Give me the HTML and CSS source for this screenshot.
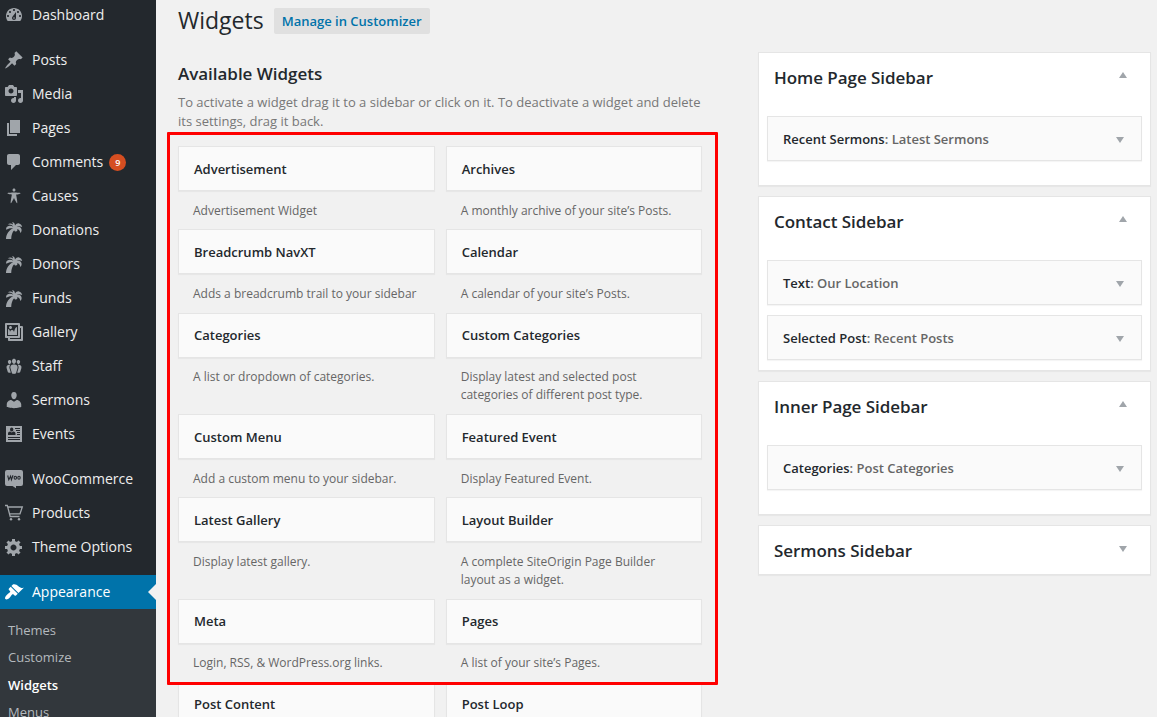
FILE: index.html
```html
<!DOCTYPE html>
<html lang="en">
<head>
<meta charset="utf-8">
<title>Widgets</title>
<link rel="stylesheet" href="styles.css">
</head>
<body>
<div class="admin">
<nav class="menu">
  <a class="item"><svg class="icon" viewBox="0 0 20 20"><path d="M3.76 16h12.48c1.1-1.37 1.76-3.11 1.76-5 0-4.42-3.58-8-8-8s-8 3.58-8 8c0 1.89.66 3.63 1.76 5zM10 4c.55 0 1 .45 1 1s-.45 1-1 1-1-.45-1-1 .45-1 1-1zM6 6c.55 0 1 .45 1 1s-.45 1-1 1-1-.45-1-1 .45-1 1-1zm8 0c.55 0 1 .45 1 1s-.45 1-1 1-1-.45-1-1 .45-1 1-1zM12 7v6c0 1.1-.9 2-2 2s-2-.9-2-2c0-.57.24-1.080.63-1.450zM4 10c.55 0 1 .45 1 1s-.45 1-1 1-1-.45-1-1 .45-1 1-1zm12 0c.55 0 1 .45 1 1s-.45 1-1 1-1-.45-1-1 .45-1 1-1zm-6 2.200a.8.8 0 1 0 0 1.600a.8.8 0 1 0 0-1.600z" fill-rule="evenodd"/></svg><span>Dashboard</span></a>
  <div class="separator"></div>
  <a class="item"><svg class="icon" viewBox="0 0 20 20"><path d="M10.440 3.020l1.820-1.820 6.360 6.350-1.830 1.820c-1.050-.68-2.480-.57-3.410.36l-.75.75c-.92.93-1.040 2.350-.35 3.410l-1.830 1.820-2.410-2.410-2.800 2.790c-.42.42-3.380 2.710-3.800 2.290s1.860-3.390 2.280-3.810l2.790-2.790L4.100 9.360l1.830-1.820c1.050.69 2.480.57 3.400-.36l.75-.75c.93-.92 1.050-2.350.36-3.410z"/></svg><span>Posts</span></a>
  <a class="item"><svg class="icon" viewBox="0 0 20 20"><path fill-rule="evenodd" d="M13 11V4c0-.55-.45-1-1-1h-1.670L9 1H5L3.670 3H2c-.55 0-1 .45-1 1v7c0 .55.45 1 1 1h10c.55 0 1-.45 1-1zM7 4.500c1.380 0 2.500 1.120 2.500 2.500S8.380 9.500 7 9.500 4.500 8.380 4.500 7 5.620 4.500 7 4.500zM14 6h5v10.500c0 1.380-1.120 2.500-2.500 2.500S14 17.880 14 16.500s1.120-2.500 2.500-2.500c.17 0 .34.02.5.05V9h-3V6zm-4 8.050V13h2v3.500c0 1.380-1.120 2.500-2.500 2.500S7 17.880 7 16.500 8.120 14 9.500 14c.17 0 .34.02.5.05z"/></svg><span>Media</span></a>
  <a class="item"><svg class="icon" viewBox="0 0 20 20"><path d="M6 15V2h10v13H6zm-1 1h8v2H3V5h2v11z"/></svg><span>Pages</span></a>
  <a class="item"><svg class="icon" viewBox="0 0 20 20"><path d="M5 2h9c1.100 0 2 .9 2 2v7c0 1.100-.9 2-2 2h-2l-5 5v-5H5c-1.100 0-2-.9-2-2V4c0-1.100.9-2 2-2z"/></svg><span>Comments</span><b class="count">9</b></a>
  <a class="item"><svg class="icon" viewBox="0 0 20 20"><path d="M10 2.600c.83 0 1.500.67 1.500 1.500s-.67 1.510-1.500 1.510c-.82 0-1.500-.68-1.500-1.510s.68-1.500 1.500-1.500zM3.400 7.360c0-.65 6.600-.76 6.600-.76s6.600.11 6.600.76-4.470 1.400-4.470 1.400 1.690 8.140 1.060 8.380c-.62.24-3.190-5.190-3.190-5.190s-2.560 5.430-3.180 5.190c-.63-.24 1.060-8.380 1.060-8.380S3.400 8.010 3.400 7.360z"/></svg><span>Causes</span></a>
  <a class="item"><svg class="icon" viewBox="0 0 20 20"><path id="palm" d="M8 2.300C9.700 2 10.800 3.300 11 5.400C12.200 3.700 13.700 3 15 3.400C16.700 3.900 17.800 5.200 18.200 7C16 6 13.800 5.900 12 6.900C14.200 6.600 16.300 7 17.100 8.300C18 9.800 17.700 11.900 16.400 13C16 10.800 14.900 9.200 13.200 9C13.900 10.400 13 11.700 11.500 11.500C10.800 11.400 10.300 10.900 10.200 10.200C8.300 12 7.300 15.200 7.200 19H2C2.100 14 5 10.300 9.100 8.300C6.500 7.900 4.200 8.300 2.200 9.800C1.700 7.600 3 6 5.500 5.700C6.900 5.600 8.300 6 9.300 6.700C8 5 6 4.200 3.700 4.700C5 3.200 7.300 3.200 9 4.600C9 3.700 8.700 2.900 8 2.300z"/></svg><span>Donations</span></a>
  <a class="item"><svg class="icon" viewBox="0 0 20 20"><use href="#palm"/></svg><span>Donors</span></a>
  <a class="item"><svg class="icon" viewBox="0 0 20 20"><use href="#palm"/></svg><span>Funds</span></a>
  <a class="item"><svg class="icon" viewBox="0 0 20 20"><path d="M16 4h1.960c.57 0 1.040.47 1.040 1.040v12.920c0 .57-.47 1.040-1.040 1.040H5.040C4.470 19 4 18.530 4 17.960V16H2.040C1.470 16 1 15.530 1 14.960V2.040C1 1.470 1.470 1 2.040 1h12.920c.57 0 1.040.47 1.040 1.040V4zM3 14h11V3H3v11zm5-8.500C8 4.670 7.330 4 6.500 4S5 4.670 5 5.500 5.670 7 6.500 7 8 6.330 8 5.500zm2 4.500s1-5 3-5v8H4V7c2 0 2 3 2 3s.33-2 2-2 2 2 2 2zm7 7V6h-1v8.960c0 .57-.47 1.040-1.040 1.040H6v1h11z" fill-rule="evenodd"/></svg><span>Gallery</span></a>
  <a class="item"><svg class="icon" viewBox="0 0 20 20"><path d="M8.030 4.460c-.29 1.280.55 3.460 1.970 3.460 1.410 0 2.250-2.180 1.960-3.460-.22-.98-1.080-1.630-1.960-1.630-.89 0-1.740.65-1.970 1.630zm-4.130.9c-.25 1.080.47 2.930 1.670 2.930s1.920-1.850 1.670-2.930c-.19-.83-.92-1.390-1.670-1.390s-1.480.56-1.670 1.390zm8.860 0c-.25 1.080.47 2.930 1.660 2.930 1.200 0 1.920-1.850 1.670-2.930-.19-.83-.92-1.390-1.670-1.390-.74 0-1.470.56-1.660 1.390zm-.59 11.430l1.250-4.300C14.200 10 12.710 8.470 10 8.470c-2.720 0-4.210 1.530-3.440 4.020l1.260 4.300C8.050 17.510 9 18 10 18c.98 0 1.940-.49 2.170-1.210zm-6.100-7.630c-.49.67-.96 1.830-.42 3.590l1.120 3.790c-.34.2-.77.31-1.200.31-.85 0-1.650-.41-1.850-1.030l-1.070-3.650c-.65-2.110.61-3.400 2.920-3.400.27 0 .54.02.79.06-.1.1-.2.22-.29.33zm8.350-.39c2.310 0 3.580 1.290 2.920 3.400l-1.070 3.650c-.2.62-1 1.030-1.850 1.030-.43 0-.86-.11-1.200-.31l1.110-3.770c.55-1.780.08-2.940-.42-3.610-.08-.11-.18-.23-.28-.33.25-.04.51-.06.79-.06z"/></svg><span>Staff</span></a>
  <a class="item"><svg class="icon" viewBox="0 0 20 20"><path d="M10 9.250c-2.270 0-2.730-3.440-2.730-3.440C7 4.020 7.820 2 9.970 2c2.160 0 2.980 2.020 2.710 3.810 0 0-.41 3.440-2.680 3.440zm0 2.570L12.720 10c2.390 0 4.520 2.330 4.520 4.530v2.490s-3.650 1.130-7.240 1.130c-3.650 0-7.240-1.130-7.240-1.130v-2.490c0-2.250 1.940-4.480 4.470-4.480z"/></svg><span>Sermons</span></a>
  <a class="item"><svg class="icon" viewBox="0 0 20 20"><path fill-rule="evenodd" d="M2 2h16v16H2zM7.700 3.600a1.700 1.900 0 1 0 0 3.800a1.700 1.900 0 1 0 0-3.800zM4 11V9.500C4 8.200 5 7.600 6.200 7.500L7.700 8.600L9.200 7.500C10.500 7.600 11.500 8.200 11.500 9.500V11zM11 4h5v1h-5zM12 6h4v1h-4zM13 8h3v1h-3zM13 10h3v1h-3zM4 13h12v1H4zM4 15h12v1H4z"/></svg><span>Events</span></a>
  <div class="separator"></div>
  <a class="item"><svg class="icon" viewBox="0 0 20 20"><path d="M3 1h14q2 0 2 2v12q0 2-2 2h-5v2.300L8.500 17H3q-2 0-2-2V3q0-2 2-2z"/><path class="cutout" d="M3.700 6.500l1.100 4.300 1.800-3.600.8 3.600L9 6.300M11.300 7.300a1.200 1.500 0 1 0 0 3a1.200 1.500 0 1 0 0-3zM15 7.300a1.200 1.500 0 1 0 0 3a1.200 1.500 0 1 0 0-3z"/></svg><span>WooCommerce</span></a>
  <a class="item"><svg class="icon" viewBox="0 0 20 20"><path class="line" d="M1 2.500h2.300L6.200 13.500H15.500M4 4h14.300L16 10.800H5.500"/><circle cx="7" cy="16.200" r="1.200"/><circle cx="15" cy="16.200" r="1.200"/></svg><span>Products</span></a>
  <a class="item"><svg class="icon" viewBox="0 0 20 20"><path fill-rule="evenodd" d="M18 12h-2.180c-.17.7-.44 1.350-.81 1.930l1.540 1.540-2.100 2.100-1.540-1.540c-.58.36-1.230.63-1.910.79V19H8v-2.180c-.68-.16-1.330-.43-1.910-.79l-1.540 1.540-2.120-2.120 1.540-1.540c-.36-.58-.63-1.230-.79-1.910H1V9.030h2.170c.16-.7.44-1.350.8-1.940L2.430 5.550l2.100-2.100 1.540 1.540c.58-.37 1.240-.64 1.930-.81V2h3v2.180c.68.16 1.330.43 1.910.79l1.540-1.540 2.120 2.120-1.540 1.540c.36.59.64 1.240.8 1.940H18V12zm-8.500 1.500c1.660 0 3-1.340 3-3s-1.340-3-3-3-3 1.340-3 3 1.340 3 3 3z"/></svg><span>Theme Options</span></a>
  <div class="separator"></div>
  <a class="item current"><svg class="icon" viewBox="0 0 20 20"><path d="M14.480 11.060L7.410 3.990l1.500-1.500c.5-.56 2.300-.47 3.510.32 1.210.8 1.430 1.280 2.910 2.100 1.180.64 2.450 1.260 4.450.85zm-.71.71L6.700 4.700 4.930 6.470c-.39.39-.39 1.020 0 1.410l1.060 1.060c.39.39.39 1.030 0 1.420-.6.6-1.430 1.110-2.210 1.690-.35.26-.7.53-1.010.84C1.430 14.230.4 16.080 1.400 17.070c.99 1 2.840-.03 4.180-1.360.31-.31.58-.66.85-1.020.57-.78 1.080-1.610 1.690-2.210.39-.39 1.020-.39 1.410 0l1.060 1.060c.39.39 1.020.39 1.410 0z"/></svg><span>Appearance</span></a>
  <div class="submenu"><a>Themes</a><a>Customize</a><a class="active">Widgets</a><a>Menus</a></div>
</nav>
<main class="content">
  <section class="available">
    <header class="heading"><h1>Widgets</h1><a class="action">Manage in Customizer</a></header>
    <h2>Available Widgets</h2>
    <p class="intro">To activate a widget drag it to a sidebar or click on it. To deactivate a widget and delete<br>its settings, drag it back.</p>
    <div class="grid">
      <div><h3 class="card">Advertisement</h3><p>Advertisement Widget</p></div>
      <div><h3 class="card">Archives</h3><p>A monthly archive of your site’s Posts.</p></div>
      <div><h3 class="card">Breadcrumb NavXT</h3><p>Adds a breadcrumb trail to your sidebar</p></div>
      <div><h3 class="card">Calendar</h3><p>A calendar of your site’s Posts.</p></div>
      <div><h3 class="card">Categories</h3><p>A list or dropdown of categories.</p></div>
      <div><h3 class="card">Custom Categories</h3><p>Display latest and selected post<br>categories of different post type.</p></div>
      <div><h3 class="card">Custom Menu</h3><p>Add a custom menu to your sidebar.</p></div>
      <div><h3 class="card">Featured Event</h3><p>Display Featured Event.</p></div>
      <div><h3 class="card">Latest Gallery</h3><p>Display latest gallery.</p></div>
      <div><h3 class="card">Layout Builder</h3><p>A complete SiteOrigin Page Builder<br>layout as a widget.</p></div>
      <div><h3 class="card">Meta</h3><p>Login, RSS, &amp; WordPress.org links.</p></div>
      <div><h3 class="card">Pages</h3><p>A list of your site’s Pages.</p></div>
      <div><h3 class="card">Post Content</h3></div>
      <div><h3 class="card">Post Loop</h3></div>
    </div>
    <div class="highlight"></div>
  </section>
  <aside class="areas">
    <section class="area open"><h2>Home Page Sidebar<i class="arrow up"></i></h2>
      <div class="card"><span>Recent Sermons<em>: Latest Sermons</em></span><i class="arrow"></i></div></section>
    <section class="area open"><h2>Contact Sidebar<i class="arrow up"></i></h2>
      <div class="card"><span>Text<em>: Our Location</em></span><i class="arrow"></i></div>
      <div class="card"><span>Selected Post<em>: Recent Posts</em></span><i class="arrow"></i></div></section>
    <section class="area open"><h2>Inner Page Sidebar<i class="arrow up"></i></h2>
      <div class="card"><span>Categories<em>: Post Categories</em></span><i class="arrow"></i></div></section>
    <section class="area"><h2>Sermons Sidebar<i class="arrow"></i></h2></section>
  </aside>
</main>
</div>
</body>
</html>
```
FILE: styles.css
```css
* { box-sizing: border-box; }
body {
  margin: 0;
  overflow: hidden;
  background: #f1f1f1;
  color: #23282d;
  font: 13px/19px "Open Sans", sans-serif;
}
h1, h2, h3, p { margin: 0; }
.admin { display: flex; height: 717px; overflow: hidden; }

.menu {
  flex: none;
  width: 156px;
  margin-top: -2px;
  background: #23282d;
  display: flex;
  flex-direction: column;
}
.item {
  flex: none;
  position: relative;
  display: flex;
  align-items: center;
  height: 34px;
  padding-left: 4px;
  gap: 8px;
  font-size: 14px;
  color: #eee;
}
.item span { padding-bottom: 2px; }
.icon { width: 20px; height: 20px; fill: #a0a5aa; }
.icon .line { fill: none; stroke: #a0a5aa; stroke-width: 1.3; }
.icon .cutout { fill: none; stroke: #23282d; stroke-width: 1.1; }
.separator { flex: none; height: 11px; }
.count {
  width: 17px;
  height: 17px;
  margin-left: -2px;
  border-radius: 50%;
  background: #d54e21;
  color: #fff;
  font-size: 9px;
  font-weight: 600;
  line-height: 17px;
  text-align: center;
}
.current { background: #0073aa; color: #fff; }
.current .icon { fill: #fff; }
.current::after {
  content: "";
  position: absolute;
  right: 0;
  top: 9px;
  border: 8px solid transparent;
  border-left: 0;
  border-right-color: #f1f1f1;
}
.submenu {
  flex: 1 0 120px;
  padding: 8px 8px 0;
  background: #32373c;
}
.submenu a { display: block; height: 27.4px; line-height: 27.4px; color: #b4b9be; }
.submenu .active { color: #fff; font-weight: 600; }

.content {
  flex: 1;
  display: flex;
  justify-content: space-between;
  padding: 0 6px 0 22px;
}
.available { width: 525px; position: relative; }
.heading { display: flex; align-items: flex-start; gap: 10px; height: 64px; }
.heading h1 { font-size: 23px; font-weight: 400; line-height: 40px; }
.action {
  margin-top: 8px;
  padding: 0 8px;
  border-radius: 2px;
  background: #e0e0e0;
  color: #0073aa;
  font-weight: 600;
  line-height: 26px;
}
.available h2 { font-size: 17px; font-weight: 600; line-height: 20px; letter-spacing: -.03px; }
.intro { margin-top: 9px; color: #777; }
.grid {
  display: grid;
  grid-template-columns: 256.7px 256.7px;
  column-gap: 11px;
  margin-top: 15px;
}
.grid p {
  margin: 10.67px 0 9.67px;
  padding: 0 15px;
  color: #666;
  font-size: 12px;
  line-height: 18px;
}
.card {
  height: 45px;
  padding: .6px 15px 0;
  border: 1px solid #e5e5e5;
  background: #fafafa;
  box-shadow: 0 1px 1px rgba(0, 0, 0, .04);
  font-size: 13px;
  font-weight: 600;
  line-height: 43px;
}
.highlight {
  position: absolute;
  left: -11px;
  top: 132px;
  width: 551px;
  height: 553px;
  border: 3px solid #f00;
  border-radius: 1px;
}

.areas { width: 393px; padding-top: 52px; display: flex; flex-direction: column; gap: 10px; }
.area {
  padding: 0 8px;
  border: 1px solid #e5e5e5;
  background: #fff;
  box-shadow: 0 1px 1px rgba(0, 0, 0, .04);
}
.area.open { min-height: 134px; padding-bottom: 10px; }
.area.open h2 { margin-bottom: 15px; }
.area h2 {
  display: flex;
  justify-content: space-between;
  height: 48px;
  padding: 0 15.5px 0 7px;
  font-size: 17px;
  font-weight: 600;
  line-height: 50px;
  letter-spacing: -.05px;
}
.areas .card { display: flex; justify-content: space-between; padding: 1px 17px 0 15px; }
.card + .card { margin-top: 10px; }
.card em { color: #666; font-style: normal; }
.arrow { border: 4.500px solid transparent; border-top: 6px solid #a0a5aa; border-bottom: 0; align-self: flex-start; }
.card .arrow { margin-top: 19px; }
.arrow.up { border-top: 0; border-bottom: 6px solid #a0a5aa; }
.area h2 .arrow { margin-top: 20px; }
.area h2 .arrow.up { margin-top: 19px; }
```
